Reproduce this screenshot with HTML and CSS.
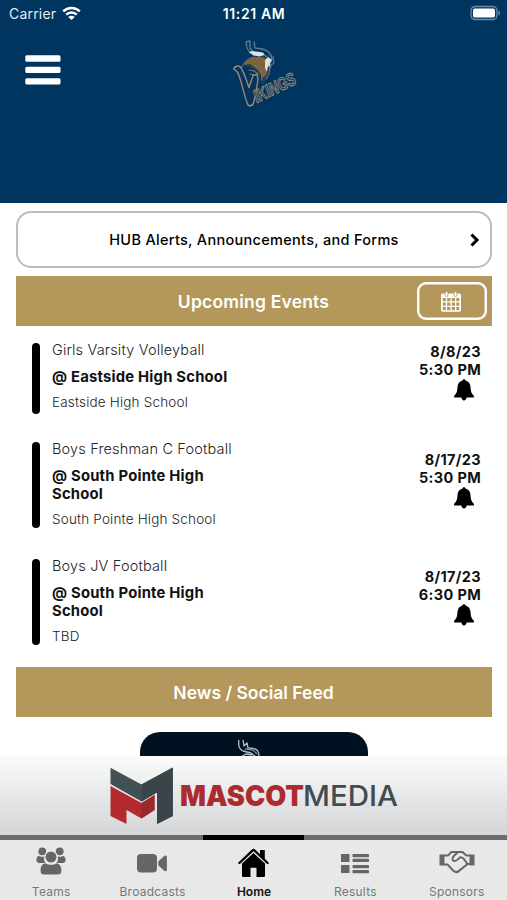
FILE: index.html
```html
<!DOCTYPE html>
<html lang="en">
<head>
<meta charset="utf-8">
<meta name="viewport" content="width=device-width, initial-scale=1">
<title>Vikings</title>
<link rel="stylesheet" href="styles.css">
</head>
<body>
<svg class="defs" aria-hidden="true">
  <symbol id="bell" viewBox="0 0 22 22"><path d="M11 0.2c1 0 1.5.6 1.5 1.4 3.200.8 4.800 3.200 5 6.500.2 4 .7 6.600 3.400 8.600v1.800H1.100v-1.800c2.700-2 3.200-4.600 3.400-8.600.2-3.300 1.800-5.700 5-6.500C9.500.8 10 .2 11 .2zM8.300 18h5.400c-.2 2.200-1.300 3.500-2.700 3.500S8.500 20.200 8.300 18z"/></symbol>
</svg>
<div class="screen">
  <header class="header">
    <div class="status">
      <div class="carrier"><span class="carrier-name">Carrier</span>
        <svg width="19" height="15" viewBox="0 0 19 15" fill="none" stroke="#fff" stroke-width="2.500"><path d="M1.200 5.400C5.800.8 13.200.8 17.800 5.400M4.200 8.700c3-2.900 7.600-2.900 10.600 0"/><path d="M9.500 14 6.200 10.900c1.800-1.700 4.800-1.700 6.600 0z" fill="#fff" stroke="none"/></svg>
      </div>
      <div class="time">11:21 AM</div>
      <svg class="battery" width="32" height="16" viewBox="0 0 32 16"><rect x="1" y="1.500" width="26" height="13" rx="4" fill="none" stroke="#6f8ba5" stroke-width="1.300"/><rect x="3" y="3.500" width="22" height="9" rx="1.800" fill="#fff"/><path d="M28.500 5.500c2 .8 2 4.200 0 5z" fill="#6f8ba5"/></svg>
    </div>
    <div class="masthead">
      <svg class="menu" width="36" height="30" viewBox="0 0 36 30" fill="#fff"><rect x=".3" y=".3" width="35.200" height="6.400" rx="1.500"/><rect x=".3" y="11.700" width="35.200" height="6.400" rx="1.500"/><rect x=".3" y="23.200" width="35.200" height="6.400" rx="1.500"/></svg>
      <svg class="team-logo" width="76" height="76" viewBox="0 0 76 76" fill="none" stroke-linejoin="round" stroke-linecap="round">
        <path d="M12 27c3-5 8-9 14-9l14-3 1 8-3 12-7 11-6-12-7-6z" fill="#1d3c58"/>
        <path d="M12 26c3-5 8-8 14-8 5 0 8 1 9 4l-2 4 2 9-4 4-5-8-8-6z" fill="#806437"/>
        <path d="M14 3l1 6 3 5 13 1 4 3M14 3l4-1v7l3 4M22 3l1 6 7 1c6 1 9 4 10 10l-2 4" stroke="#617d94" stroke-width="1.300"/>
        <path d="M17 13l3-1 11 1.500 1.500 2.500-5 1.500-6-1zM33 21l3-3 4 3-2 3 1 5-3-2-1 6-2-4z" fill="#dbe2e3"/>
        <path d="M10 28c2-5 7-10 13-10M41 17l1 7-4 3-1 8-3 5M24 27l5 5 1 9" stroke="#5f7181" stroke-width="1.200"/>
        <path d="M1.500 30C3 27.500 5.500 26.500 8 27.500c4 5 6 13 9 21l4-12 4-1 1 5-3 18-2 7-3 1.500-2-1c-5-12-7-28-11-33.500z" stroke="#938a78" stroke-width="1.400" fill="#06345d"/>
        <path d="M17 31l5 1 4 3M18 35l5 1" stroke="#81796a" stroke-width="1.200"/>
        <text class="wordmark" x="25" y="64" transform="rotate(-26 25 64)" textLength="45" lengthAdjust="spacingAndGlyphs">IKINGS</text>
      </svg>
    </div>
  </header>

  <main class="content">
    <a class="alerts"><span>HUB Alerts, Announcements, and Forms</span>
      <svg class="chevron" width="10" height="14" viewBox="0 0 10 14" fill="none" stroke="#000" stroke-width="3"><path d="M1.500 1.500 7 7l-5.500 5.500"/></svg>
    </a>
    <section class="section-bar upcoming"><h2>Upcoming Events</h2>
      <a class="calendar"><svg width="20" height="21" viewBox="0 0 20 21"><rect y="2.500" width="20" height="18.300" rx="1.700" fill="#fff"/><g fill="#b4975a"><path d="M1.800 7h3v3.200h-3zM6.100 7h3.300v3.200H6.100zM10.700 7H14v3.200h-3.300zM15.300 7h3v3.200h-3zM1.800 11.500h3v3.200h-3zM6.100 11.500h3.300v3.200H6.100zM10.700 11.500H14v3.200h-3.300zM15.300 11.500h3v3.200h-3zM1.800 16h3v3.200h-3zM6.100 16h3.300v3.200H6.100zM10.700 16H14v3.200h-3.300zM15.300 16h3v3.200h-3z"/></g><rect x="4" y=".5" width="3" height="5" rx="1.500" fill="#fff" stroke="#b4975a" stroke-width=".8"/><rect x="13" y=".5" width="3" height="5" rx="1.500" fill="#fff" stroke="#b4975a" stroke-width=".8"/></svg></a>
    </section>

    <div class="events">
      <article class="event short">
        <i class="marker"></i>
        <div class="details"><p class="team">Girls Varsity Volleyball</p><h3>@ Eastside High School</h3><p class="place">Eastside High School</p></div>
        <div class="when"><b>8/8/23</b><b>5:30 PM</b><svg width="22" height="22"><use href="#bell"/></svg></div>
      </article>
      <article class="event">
        <i class="marker"></i>
        <div class="details"><p class="team">Boys Freshman C Football</p><h3>@ South Pointe High<br>School</h3><p class="place">South Pointe High School</p></div>
        <div class="when"><b>8/17/23</b><b>5:30 PM</b><svg width="22" height="22"><use href="#bell"/></svg></div>
      </article>
      <article class="event">
        <i class="marker"></i>
        <div class="details"><p class="team">Boys JV Football</p><h3>@ South Pointe High<br>School</h3><p class="place">TBD</p></div>
        <div class="when"><b>8/17/23</b><b>6:30 PM</b><svg width="22" height="22"><use href="#bell"/></svg></div>
      </article>
    </div>

    <section class="section-bar news"><h2>News / Social Feed</h2></section>
    <div class="post"><svg width="30" height="18" viewBox="0 0 30 18" fill="none" stroke="#b8bfc4" stroke-width="1.300" stroke-linejoin="round"><path d="M3 1c-1 5 0 9 4 11l8 2 5 4M7 1l1 6 3-3 1 5 5 .3c4 .7 6 4 6 8M5 18l5-3 6 1"/><path d="M9 10l8 1 4 4" stroke="#7c8992"/></svg></div>
  </main>

  <aside class="ad">
    <svg width="290" height="60" viewBox="0 0 290 60">
      <path d="M.5.700 31.500 17.500 62.800.500V57L47 57V25.500L31.500 34.500.5 17z" fill="none"/>
      <path d="M.5.700 31.500 17.500 62.800.500V49L47 57V25.500L31.500 34.500.5 17z" fill="#435054"/>
      <path d="M31.500 17.500 62.800.500V49L47 57V25.500L31.500 34.500z" fill="#394549"/>
      <path d="M.5 19 31.500 36 44.500 28V43L31.500 51.500 16.500 43V57L.5 49z" fill="#b52a2e"/>
      <path d="M31.500 36 44.500 28V43L31.500 51.500z" fill="#98292d"/>
      <text class="mascot" x="70" y="39" textLength="124" lengthAdjust="spacingAndGlyphs">MASCOT</text>
      <text class="media" x="193" y="39" textLength="95" lengthAdjust="spacingAndGlyphs">MEDIA</text>
    </svg>
  </aside>

  <nav class="tabs">
    <a class="tab"><span class="icon"><svg width="30" height="28" viewBox="0 0 30 28" fill="#666"><circle cx="6.300" cy="4.300" r="3.900"/><circle cx="23.700" cy="4.300" r="3.900"/><path d="M2.600 8.800c1.700 1.300 4 1.400 6 .4-1 2.500-.7 5 1.200 6.800H3.200C-.8 16-.1 10.500 2.600 8.800zM27.400 8.800c-1.700 1.300-4 1.400-6 .4 1 2.500.7 5-1.200 6.800h6.600c4 0 3.300-5.500.6-7.200z"/><path d="M9.300 16.200c3.500 2.200 7.900 2.200 11.400 0 3.500 1 4.700 3.700 4.700 7.300 0 3-1.200 4-3.800 4H8.400c-2.600 0-3.800-1-3.800-4 0-3.600 1.200-6.300 4.700-7.300z"/><circle cx="15" cy="10" r="6.100" stroke="#e8e8e8" stroke-width="1.200"/></svg></span><span>Teams</span></a>
    <a class="tab"><span class="icon"><svg width="31" height="28" viewBox="0 0 31 28" fill="#666"><rect x="0" y="7" width="20" height="18.500" rx="4"/><path d="m21.200 14.500 5.700-5.300c1.300-1.200 3-.8 3 .8v12.700c0 1.600-1.700 2-3 .8l-5.700-5.300z"/></svg></span><span>Broadcasts</span></a>
    <a class="tab active"><span class="icon"><svg width="31" height="30" viewBox="0 0 31 30"><path d="M1.400 15 14.400 2.600c.6-.6 1.600-.6 2.200 0L29.600 15" fill="none" stroke="#000" stroke-width="2.300" stroke-linecap="round"/><path d="M22 2h4.800v10L22 7.400zM4 15.500 15.500 5 27 15.500v12c0 1-.6 1.500-1.500 1.500h-7v-9.200h-6V29h-7C4.600 29 4 28.500 4 27.500z"/></svg></span><span>Home</span></a>
    <a class="tab"><span class="icon"><svg width="28" height="28" viewBox="0 0 28 28" fill="#666"><path d="M0 7h8.500v8H0zM0 18h8.500v8H0z"/><rect x="11.500" y="7" width="16.500" height="3.200" rx=".7"/><rect x="11.500" y="11.800" width="16.500" height="3.200" rx=".7"/><rect x="11.500" y="18" width="16.500" height="3.200" rx=".7"/><rect x="11.500" y="23" width="16.500" height="3.200" rx=".7"/></svg></span><span>Results</span></a>
    <a class="tab"><span class="icon"><svg width="36" height="28" viewBox="0 0 36 28" fill="none" stroke="#666" stroke-width="2" stroke-linejoin="round" stroke-linecap="round"><g transform="translate(0 2.500)"><path d="M.5 5h5v11h-5zM30.500 5h5v11h-5z" fill="#666" stroke="none"/><path d="M5.500 6H9l3.500-3.500h6.200M30.500 6h-3.200l-3.800-3.500h-4.300L15 6.300c-2.500 2.500-1.700 5.300.5 5.300 2.800 0 3.800-2.600 5.500-3.600 1.500-.8 2.800.3 4.300 2l2.400 3.300c.8 1.200-.3 3-2 3.500l-6 4.800c-1.700 1.400-3.300 1.400-5 0L8.500 15h-3M27.500 14.500h3"/></g></svg></span><span>Sponsors</span></a>
  </nav>
</div>
</body>
</html>
```
FILE: styles.css
```css
* { box-sizing: border-box; }
body { margin: 0; background: #fff; font-family: Inter, "Liberation Sans", sans-serif; color: #111; }
h2, h3, p { margin: 0; }
.defs { display: none; }
svg { display: block; flex: none; }
span, b, h3, p, h2 { white-space: nowrap; }
.screen { width: 507px; height: 900px; display: flex; flex-direction: column; overflow: hidden; }

.header { height: 203px; flex: none; background: #00355f; color: #fff; }
.status { height: 27px; display: grid; grid-template-columns: 1fr auto 1fr; align-items: center; padding: 0 5px 1px 9px; }
.carrier { display: flex; align-items: center; gap: 6px; font-size: 14px; color: #e3eaf0; }
.carrier-name { letter-spacing: 0.2px; }
.time { font-size: 14px; font-weight: 600; letter-spacing: 0.600px; margin-left: -3px; }
.battery { justify-self: end; }
.masthead { display: grid; grid-template-columns: 1fr auto 1fr; align-items: start; padding: 12px 8px 0 25px; }
.menu { margin-top: 16px; }
.team-logo { margin-left: 15px; }
.wordmark { font: italic 700 18px "Liberation Sans", sans-serif; fill: #123a5d; stroke: #a0947e; stroke-width: 0.9px; }

.content { flex: none; height: 553px; padding: 8px 15px 0 16px; overflow: hidden; }
.alerts { height: 57px; display: grid; grid-template-columns: 1fr auto 1fr; align-items: center; border: 2px solid #bcbcbc; border-radius: 15px; padding-right: 10px; font-size: 14.500px; font-weight: 500; color: #000; }
.alerts span { grid-column: 2; margin-left: 10px; letter-spacing: 0.300px; }
.chevron { justify-self: end; }
.section-bar { height: 50px; display: grid; grid-template-columns: 1fr auto 1fr; align-items: center; background: #b4975a; color: #fff; padding-right: 5px; }
.section-bar h2 { grid-column: 2; font-size: 17.500px; font-weight: 600; margin-left: 4px; }
.section-bar.upcoming h2 { letter-spacing: 0.200px; }
.upcoming { margin-top: 8px; }
.calendar { justify-self: end; width: 70px; height: 38px; border: 2px solid #fff; box-shadow: inset 0 0 0 0.500px #fff; border-radius: 9px; display: grid; place-items: center; padding-right: 2px; }

.events { height: 341px; padding: 17px 11px 0 16px; display: flex; flex-direction: column; }
.event { height: 86px; margin-bottom: 31px; display: flex; flex: none; }
.event.short { height: 71px; margin-bottom: 28px; }
.marker { width: 8px; border-radius: 4px; background: #000; }
.details { flex: 1; margin: -2px 0 0 12px; line-height: 18px; }
.team { font-size: 14.500px; font-weight: 300; color: #222; letter-spacing: 0.170px; }
.details h3 { margin-top: 9px; font-size: 14.800px; line-height: 18px; font-weight: 700; letter-spacing: 0.220px; }
.place { margin-top: 7px; font-size: 13.500px; font-weight: 300; color: #222; letter-spacing: 0.180px; }
.when { display: flex; flex-direction: column; align-items: flex-end; padding-top: 9px; font-size: 14.500px; line-height: 18px; }
.short .when { padding-top: 0; }
.when b { font-weight: 650; letter-spacing: 0.350px; }
.when svg { margin-right: 6px; }
.post { width: 228px; height: 60px; margin: 15px 0 0 124px; padding: 7px 0 0 96px; border-radius: 20px; background: #001221; }

.ad { height: 79px; flex: none; background: linear-gradient(#fbfbfb, #d3d5d7); padding: 11px 0 0 110px; }
.mascot { font: 900 28px "Inter", sans-serif; fill: #ad2b2f; }
.media { font: 500 28px "Inter", sans-serif; fill: #414b50; }

.tabs { flex: 1; display: grid; grid-template-columns: repeat(5, 1fr); background: #e8e8e8; }
.tab { display: flex; flex-direction: column; align-items: center; border-top: 5px solid #6b6b6b; padding: 5px 0 0 1px; font-size: 12px; line-height: 16px; letter-spacing: 0.240px; color: #777; }
.tab.active { border-color: #000; color: #111; font-weight: 600; letter-spacing: 0; }
.icon { height: 39px; display: flex; align-items: flex-start; padding-top: 2px; }
.active .icon { padding-top: 3px; }
```
